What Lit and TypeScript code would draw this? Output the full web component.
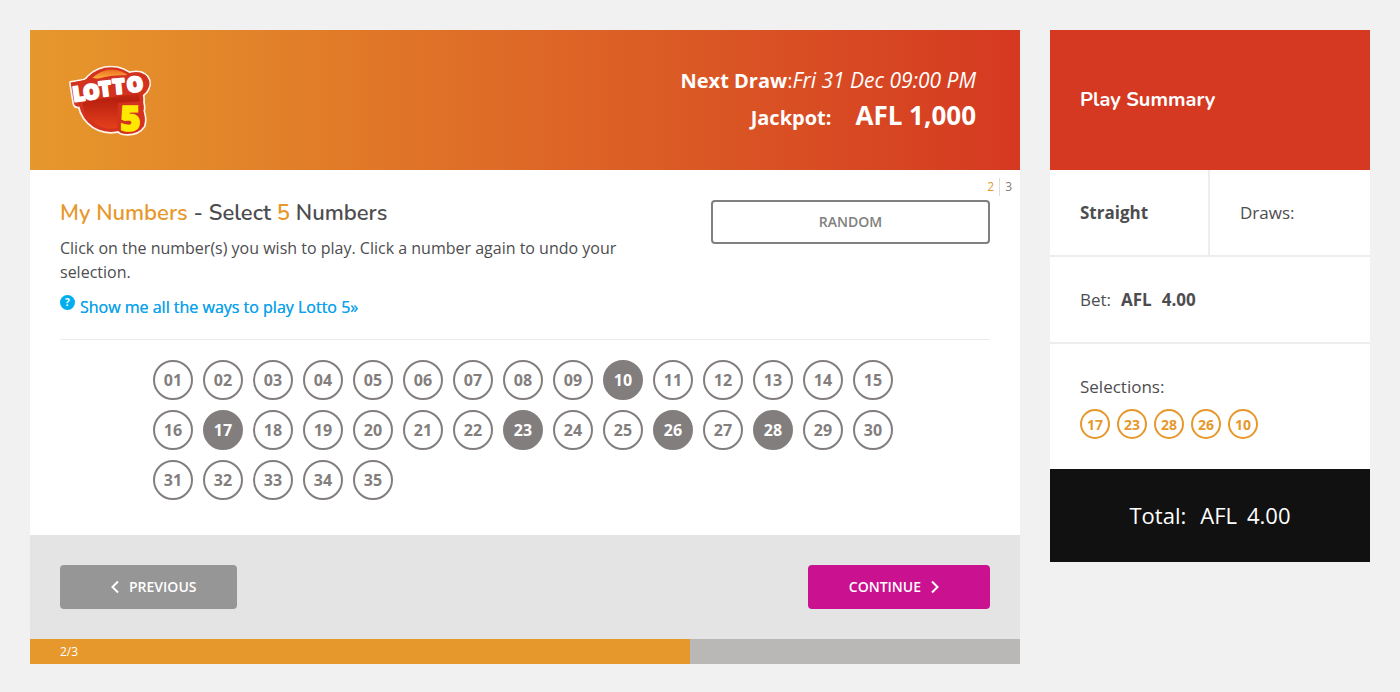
import { LitElement, html, css, svg } from "lit";
import { customElement, state } from "lit/decorators.js";
import { classMap } from "lit/directives/class-map.js";

const pad = (n: number) => String(n).padStart(2, "0");
const silhouette = svg`
  <circle cx="183" cy="147" r="97"></circle>
  <path d="M62 96 L102 89 Q122 78 142 84 L226 72 Q246 62 272 66 Q300 76 298 102 Q292 130 268 138 L84 168 Q74 168 72 158 Z"></path>
  <path d="M206 152 L278 150 Q284 170 280 182 Q288 204 282 226 Q266 250 232 250 Q206 250 202 236 Z"></path>`;

@customElement("lotto-logo")
export class LottoLogo extends LitElement {
  static styles = css`
    :host { display: block; }
    .logo { display: block; width: 82px; height: 72px; overflow: visible; }
    .edge { fill: #fff; stroke: #fff5e8; stroke-width: 10; stroke-linejoin: round; }
    .body { fill: #d2321f; }
    .word { font: 800 62px "Open Sans", sans-serif; fill: #fff; stroke: #fff; stroke-width: 6; stroke-linejoin: round; }
    .five { font: 800 104px "Open Sans", sans-serif; fill: #ffe800; stroke: #ffe800; stroke-width: 5; }
  `;
  render() {
    return html`<svg class="logo" viewBox="57 40 246 216" role="img" aria-label="Lotto 5">
      <defs>
        <linearGradient id="ball" x1="0" y1="0" x2="0" y2="1">
          <stop offset="0" stop-color="#e8542a"></stop>
          <stop offset=".5" stop-color="#b9200f"></stop>
          <stop offset="1" stop-color="#e5401c"></stop>
        </linearGradient>
        <linearGradient id="shine" x1="0" y1="0" x2="0" y2="1">
          <stop offset="0" stop-color="#ec6a22"></stop>
          <stop offset="1" stop-color="#fdb53c"></stop>
        </linearGradient>
      </defs>
      <g class="edge">${silhouette}</g>
      <g class="body">${silhouette}</g>
      <circle cx="183" cy="148" r="86" fill="url(#ball)"></circle>
      <path d="M122 86 Q180 30 244 80 Z" fill="url(#shine)"></path>
      <path class="body" d="M62 96 L102 89 Q122 78 142 84 Q190 72 226 74 Q246 62 272 66 Q300 76 298 102 Q292 124 268 130 L226 134 L152 144 L88 158 Z"></path>
      <path class="body" d="M204 156 L276 152 L280 184 Q286 204 280 226 Q262 248 232 248 Q208 248 202 236 Z"></path>
      <g class="word" text-anchor="middle">
        <text x="89" y="151" transform="rotate(-8 89 151)">L</text>
        <text x="127" y="145" transform="rotate(-8 127 145)">O</text>
        <text x="168" y="136" transform="rotate(-7 168 136)">T</text>
        <text x="208" y="129" transform="rotate(-5 208 129)">T</text>
        <text x="258" y="123" transform="rotate(-8 258 123)">O</text>
      </g>
      <text class="five" x="241" y="241" text-anchor="middle">5</text>
    </svg>`;
  }
}

@customElement("app-root")
export class AppRoot extends LitElement {
  @state() private picks = [17, 23, 28, 26, 10];

  static styles = css`
    :host {
      display: block;
      box-sizing: border-box;
      min-height: 100vh;
      padding: 30px;
      background: #f1f1f1;
      color: #4d4d4f;
      font: 400 16px/24px "Open Sans", sans-serif;
    }
    * { box-sizing: border-box; }
    h1, h2, p { margin: 0; }
    button { font: 600 14px/20px "Open Sans", sans-serif; cursor: pointer; }
    .layout { display: grid; grid-template-columns: minmax(0, 1fr) 320px; gap: 30px; align-items: start; }
    .game, .summary { background: #fff; }
    .summary { font-size: 17px; }
    .banner {
      display: flex; align-items: center; justify-content: space-between;
      min-height: 140px; padding: 0 44px 0 39px; color: #fff;
      background: linear-gradient(90deg, #e6982c, #d53921);
    }
    .draw { padding-bottom: 2px; text-align: right; font-size: 20px; line-height: 35px; }
    .draw em { font-size: 21px; }
    .jackpot { display: flex; justify-content: flex-end; align-items: baseline; gap: 24px; font-weight: 700; }
    .amount { font-size: 26px; }
    .steps { display: flex; justify-content: flex-end; margin: 0; padding: 8px 8px 4px 0; list-style: none; font-size: 12px; line-height: 18px; color: #808080; }
    .steps li + li { margin-left: 5px; padding-left: 5px; border-left: 1px solid #ddd; }
    .accent, .steps .current { color: #e6982c; }
    .content { padding: 0 30px 35px; }
    .intro { display: grid; grid-template-columns: 7fr 3fr; align-items: start; padding-bottom: 20px; border-bottom: 1px solid #ebebeb; }
    .copy { padding-right: 30px; }
    .title { font: 600 22px/26px Nunito, Lato, sans-serif; margin-bottom: 10px; }
    .copy p { font-size: 16px; }
    .help { display: flex; gap: 5px; margin-top: 11px; color: #0ea3ec; text-decoration: none; text-shadow: 0 0 0 currentColor; }
    .mark { width: 15px; height: 15px; border-radius: 50%; background: #00aeef; color: #fff; font: 700 10px/15px "Open Sans", sans-serif; text-align: center; text-shadow: none; }
    .random { height: 44px; border: 2px solid #808080; border-radius: 4px; background: #fff; color: #808080; }
    .numbers { display: grid; grid-template-columns: repeat(auto-fill, 40px); gap: 10px; padding: 20px 10% 0; }
    .ball { width: 40px; height: 40px; padding: 0; border: 2px solid #827e7d; border-radius: 50%; background: #fff; color: #827e7d; font-size: 16px; font-weight: 700; }
    .ball.on { background: #827e7d; color: #fff; }
    .actions { display: flex; justify-content: space-between; padding: 30px; background: #e4e4e4; }
    .nav { display: flex; align-items: center; height: 44px; padding: 0 41px; border: 0; border-radius: 4px; color: #fff; }
    .previous { background: #969696; }
    .continue { background: #ca1190; }
    .chevron { width: 28px; height: 14px; fill: none; stroke: #fff; stroke-width: 2; }
    .progress { background: #bab7b7; }
    .done { padding-left: 30px; background: #e6982c; color: #fff; font-size: 12px; line-height: 25px; }
    .heading { display: flex; align-items: center; min-height: 140px; padding: 0 30px; background: #d53921; color: #fff; font: 700 20px/26px Nunito, Lato, sans-serif; }
    .row { border-bottom: 2px solid #eee; }
    .split { display: grid; grid-template-columns: 1fr 1fr; }
    .cell { padding: 31px 30px 30px; }
    .split .cell:first-child { border-right: 2px solid #eee; }
    .bet { display: flex; gap: 10px; }
    .picked { display: flex; gap: 7px; margin: 10px 0 0; padding: 0; list-style: none; }
    .picked li { width: 30px; height: 30px; border: 2px solid #e6982c; border-radius: 50%; color: #e6982c; font-size: 14px; font-weight: 700; line-height: 27px; text-align: center; }
    .total { display: flex; justify-content: center; gap: 10px; padding: 30px; background: #111; color: #fff; font-size: 22px; line-height: 33px; }
    .total span:first-child { padding-right: 4px; }
  `;

  private toggle(n: number) {
    if (this.picks.includes(n)) this.picks = this.picks.filter((p) => p !== n);
    else if (this.picks.length < 5) this.picks = [...this.picks, n];
  }

  private randomise() {
    const pool = Array.from({ length: 35 }, (_, i) => i + 1);
    this.picks = Array.from({ length: 5 }, () => pool.splice(Math.floor(Math.random() * pool.length), 1)[0]);
  }

  render() {
    return html`<div class="layout">
      <main class="game">
        <header class="banner">
          <lotto-logo></lotto-logo>
          <div class="draw">
            <p><strong>Next Draw</strong>:<em>Fri 31 Dec 09:00 PM</em></p>
            <p class="jackpot"><span>Jackpot:</span><span class="amount">AFL 1,000</span></p>
          </div>
        </header>
        <ol class="steps"><li class="current">2</li><li>3</li></ol>
        <div class="content">
          <section class="intro">
            <div class="copy">
              <h1 class="title"><span class="accent">My Numbers</span> - Select <span class="accent">5</span> Numbers</h1>
              <p>Click on the number(s) you wish to play. Click a number again to undo your selection.</p>
              <a class="help" href="#ways"><span class="mark">?</span>Show me all the ways to play Lotto 5»</a>
            </div>
            <button class="random" @click=${this.randomise}>RANDOM</button>
          </section>
          <div class="numbers">
            ${Array.from({ length: 35 }, (_, i) => i + 1).map((n) => {
              const on = this.picks.includes(n);
              return html`<button class=${classMap({ ball: true, on })} aria-pressed=${on ? "true" : "false"} @click=${() => this.toggle(n)}>${pad(n)}</button>`;
            })}
          </div>
        </div>
        <div class="actions">
          <button class="nav previous"><svg class="chevron" viewBox="0 0 28 14"><path d="M17 1.5 L11.5 7 L17 12.5"></path></svg>PREVIOUS</button>
          <button class="nav continue">CONTINUE<svg class="chevron" viewBox="0 0 28 14"><path d="M11 1.5 L16.5 7 L11 12.5"></path></svg></button>
        </div>
        <div class="progress"><div class="done" style="width:${(2 / 3) * 100}%">2/3</div></div>
      </main>
      <aside class="summary">
        <h2 class="heading">Play Summary</h2>
        <div class="row split"><div class="cell"><strong>Straight</strong></div><div class="cell">Draws:</div></div>
        <div class="row cell bet"><span>Bet:</span><strong>AFL</strong><strong>4.00</strong></div>
        <div class="cell">Selections:
          <ul class="picked">${this.picks.map((n) => html`<li>${pad(n)}</li>`)}</ul>
        </div>
        <div class="total"><span>Total:</span><span>AFL</span><span>4.00</span></div>
      </aside>
    </div>`;
  }
}
